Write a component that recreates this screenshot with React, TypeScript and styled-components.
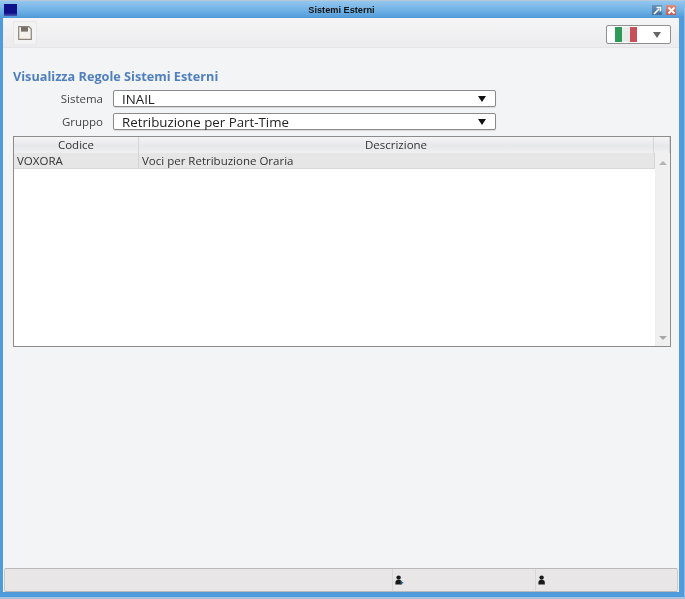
import * as React from 'react'
import styled, { createGlobalStyle } from 'styled-components'

const Global = createGlobalStyle`
  html, body { margin: 0; padding: 0; background: #5aa2de; }
  body { font-family: "Open Sans", "Noto Sans", sans-serif; }
`

const Window = styled.div`
  width: 685px;
  height: 599px;
  box-sizing: border-box;
  display: flex;
  flex-direction: column;
  background: #4f9bdc;
  padding: 0 5px 5px 3px;
  border-top: 1px solid #b4c8da;
  border-right: 1px solid #8fbde6;
  border-bottom: 2px solid #a4c4e0;
  overflow: hidden;
  filter: blur(0.35px);
`

const TitleBar = styled.div`
  height: 17px;
  flex: none;
  margin: 0 -5px 0 -3px;
  padding: 0 8px 0 4px;
  display: flex;
  align-items: center;
  justify-content: space-between;
  background: linear-gradient(#94c6ee, #6cafe4 60%, #4f98d8);
`

const Title = styled.span`
  font-family: "Liberation Sans", Arial, sans-serif;
  font-size: 9.2px;
  font-weight: bold;
  color: #141414;
  position: absolute;
  left: -1px;
  width: 685px;
  text-align: center;
`

const AppIcon = styled.div`
  width: 13px;
  height: 12px;
  margin-top: 1px;
  background: linear-gradient(#10108a 75%, #4a5ab0);
`

const WinButtons = styled.div`
  display: flex;
  gap: 4px;
  margin-top: 1px;
`

const WinButton = styled.div<{ $close?: boolean }>`
  width: 10px;
  height: 10px;
  display: flex;
  align-items: center;
  justify-content: center;
  background: ${(p) => (p.$close ? 'linear-gradient(#e08c80, #c8584c)' : 'linear-gradient(#6a94b8, #456f96)')};
`

const Content = styled.div`
  flex: 1;
  display: flex;
  flex-direction: column;
  background: #f3f4f6;
  min-height: 0;
`

const Toolbar = styled.div`
  height: 30px;
  flex: none;
  box-sizing: border-box;
  padding: 3px 8px 0 10px;
  display: flex;
  justify-content: space-between;
  background: linear-gradient(#f5f5f6, #ececee);
  border-bottom: 1px solid #e6e6e8;
`

const SaveButton = styled.div`
  width: 24px;
  height: 24px;
  box-sizing: border-box;
  display: flex;
  align-items: center;
  justify-content: center;
  background: #f3f3f4;
  border: 1px solid #e8e8e9;
  border-radius: 2px;
`

const FlagCombo = styled.div`
  width: 65px;
  height: 19px;
  margin-top: 4px;
  box-sizing: border-box;
  display: flex;
  align-items: center;
  justify-content: space-between;
  padding: 0 9px 0 8px;
  background: #fff;
  border: 1px solid #8f8f8f;
  border-radius: 2px;
`

const Flag = styled.div`
  width: 22px;
  height: 15px;
  background: linear-gradient(90deg, #2f9a55 33%, #e8ecea 33% 66%, #c8505a 66%);
`

const Form = styled.div`
  padding: 19px 8px 0 10px;
  display: flex;
  flex-direction: column;
`

const Heading = styled.div`
  font-size: 12.7px;
  line-height: 18px;
  font-weight: bold;
  color: #4f7fbe;
  margin-bottom: 5px;
`

const Row = styled.div`
  display: flex;
  align-items: center;
  height: 17px;
  margin-bottom: 6px;
`

const Label = styled.div`
  width: 90px;
  text-align: right;
  font-size: 11.5px;
  color: #444;
  margin-right: 10px;
`

const Select = styled.div`
  width: 383px;
  height: 17px;
  box-sizing: border-box;
  display: flex;
  align-items: center;
  justify-content: space-between;
  padding: 0 9px 0 8px;
  background: #fff;
  border: 1px solid #8a8a8a;
  border-radius: 2px;
  box-shadow: 0 1px 1px #d8d8d8;
  font-size: 13.3px;
  color: #222;
`

const Arrow = styled.span<{ $color?: string }>`
  width: 0;
  height: 0;
  border-left: 4px solid transparent;
  border-right: 4px solid transparent;
  border-top: 6px solid ${(p) => p.$color || '#111'};
`

const Table = styled.div`
  height: 211px;
  width: 658px;
  box-sizing: border-box;
  display: flex;
  flex-direction: column;
  background: #fff;
  border: 1px solid #8c8c8c;
`

const HeaderRow = styled.div`
  display: flex;
  height: 16px;
  flex: none;
  background: linear-gradient(#f4f4f5, #e7e8ea 55%, #f0f0f1);
`

const HeaderCell = styled.div<{ $width?: number }>`
  ${(p) => (p.$width ? `width: ${p.$width}px; flex: none;` : 'flex: 1;')}
  box-sizing: border-box;
  border-right: 1px solid #d6d6d6;
  text-align: center;
  font-size: 11.5px;
  line-height: 16px;
  color: #333;
`

const TableBody = styled.div`
  flex: 1;
  display: flex;
  min-height: 0;
`

const Rows = styled.div`
  flex: 1;
`

const DataRow = styled.div`
  display: flex;
  height: 15px;
  background: #e6e6e6;
  border-bottom: 1px solid #d8d8d8;
`

const DataCell = styled.div<{ $width?: number }>`
  ${(p) => (p.$width ? `width: ${p.$width}px; flex: none;` : 'flex: 1;')}
  box-sizing: border-box;
  padding-left: 3px;
  border-right: 1px solid #d4d4d4;
  font-size: 11.5px;
  line-height: 15px;
  color: #333;
`

const Scrollbar = styled.div`
  width: 15px;
  flex: none;
  display: flex;
  flex-direction: column;
  align-items: center;
  justify-content: space-between;
  padding: 8px 0 6px;
  box-sizing: border-box;
  background: #f0f0f1;
`

const ScrollUp = styled.span`
  width: 0;
  height: 0;
  border-left: 4px solid transparent;
  border-right: 4px solid transparent;
  border-bottom: 4px solid #b4b4b4;
`

const ScrollDown = styled.span`
  width: 0;
  height: 0;
  border-left: 4px solid transparent;
  border-right: 4px solid transparent;
  border-top: 4px solid #a8a8a8;
`

const Spacer = styled.div`
  flex: 1;
`

const StatusBar = styled.div`
  height: 24px;
  flex: none;
  margin: 0 1px;
  box-sizing: border-box;
  display: flex;
  background: #e8e6e7;
  border-top: 1px solid #bdb8b8;
  border-bottom: 1px solid #bdb8b8;
  border-left: 1px solid #cfcaca;
  border-right: 1px solid #cfcaca;
  border-radius: 2px;
`

const StatusCell = styled.div<{ $width: number; $divider?: boolean }>`
  width: ${(p) => p.$width}px;
  flex: ${(p) => (p.$divider ? 'none' : '1')};
  box-sizing: border-box;
  display: flex;
  align-items: center;
  padding-left: 2px;
  border-right: ${(p) => (p.$divider ? '1px solid #d8d6d6' : 'none')};
`

const UserIcon = ({ arrow }: { arrow?: boolean }) => (
  <svg width="9" height="10" viewBox="0 0 9 10">
    <circle cx="3.6" cy="2.6" r="2.2" fill="#1a1a1a" />
    <path d="M0.4 9.5 V7 Q0.6 5.2 2.4 5 H4.8 Q6.6 5.2 6.8 7 V9.5 Z" fill="#1a1a1a" />
    {arrow && <path d="M5.5 6 L8.8 7.8 L5.5 9.5 Z" fill="#2a5a80" />}
  </svg>
)

export default function App() {
  return (
    <>
      <Global />
      <Window>
        <TitleBar>
          <AppIcon />
          <Title>Sistemi Esterni</Title>
          <WinButtons>
            <WinButton>
              <svg width="9" height="9" viewBox="0 0 9 9">
                <path d="M1 8 L6 3 M3.5 1.5 H7.5 V5.5" stroke="#fff" strokeWidth="1.6" fill="none" />
              </svg>
            </WinButton>
            <WinButton $close>
              <svg width="9" height="9" viewBox="0 0 9 9">
                <path d="M1.5 1.5 L7.5 7.5 M7.5 1.5 L1.5 7.5" stroke="#fff" strokeWidth="1.8" fill="none" />
              </svg>
            </WinButton>
          </WinButtons>
        </TitleBar>
        <Content>
          <Toolbar>
            <SaveButton>
              <svg width="14" height="14" viewBox="0 0 14 14">
                <path d="M0.7 0.7 H11 L13.3 3 V13.3 H0.7 Z" fill="#f4f1ea" stroke="#8c8478" strokeWidth="1.2" />
                <rect x="3" y="1" width="7" height="4.6" fill="#77716a" />
              </svg>
            </SaveButton>
            <FlagCombo>
              <Flag />
              <Arrow $color="#666" />
            </FlagCombo>
          </Toolbar>
          <Form>
            <Heading>Visualizza Regole Sistemi Esterni</Heading>
            <Row>
              <Label>Sistema</Label>
              <Select>
                INAIL
                <Arrow />
              </Select>
            </Row>
            <Row>
              <Label>Gruppo</Label>
              <Select>
                Retribuzione per Part-Time
                <Arrow />
              </Select>
            </Row>
            <Table>
              <HeaderRow>
                <HeaderCell $width={125}>Codice</HeaderCell>
                <HeaderCell>Descrizione</HeaderCell>
                <HeaderCell $width={16} />
              </HeaderRow>
              <TableBody>
                <Rows>
                  <DataRow>
                    <DataCell $width={125}>VOXORA</DataCell>
                    <DataCell>Voci per Retribuzione Oraria</DataCell>
                  </DataRow>
                </Rows>
                <Scrollbar>
                  <ScrollUp />
                  <ScrollDown />
                </Scrollbar>
              </TableBody>
            </Table>
          </Form>
          <Spacer />
          <StatusBar>
            <StatusCell $width={388} $divider />
            <StatusCell $width={143} $divider>
              <UserIcon arrow />
            </StatusCell>
            <StatusCell $width={142}>
              <UserIcon />
            </StatusCell>
          </StatusBar>
        </Content>
      </Window>
    </>
  )
}
